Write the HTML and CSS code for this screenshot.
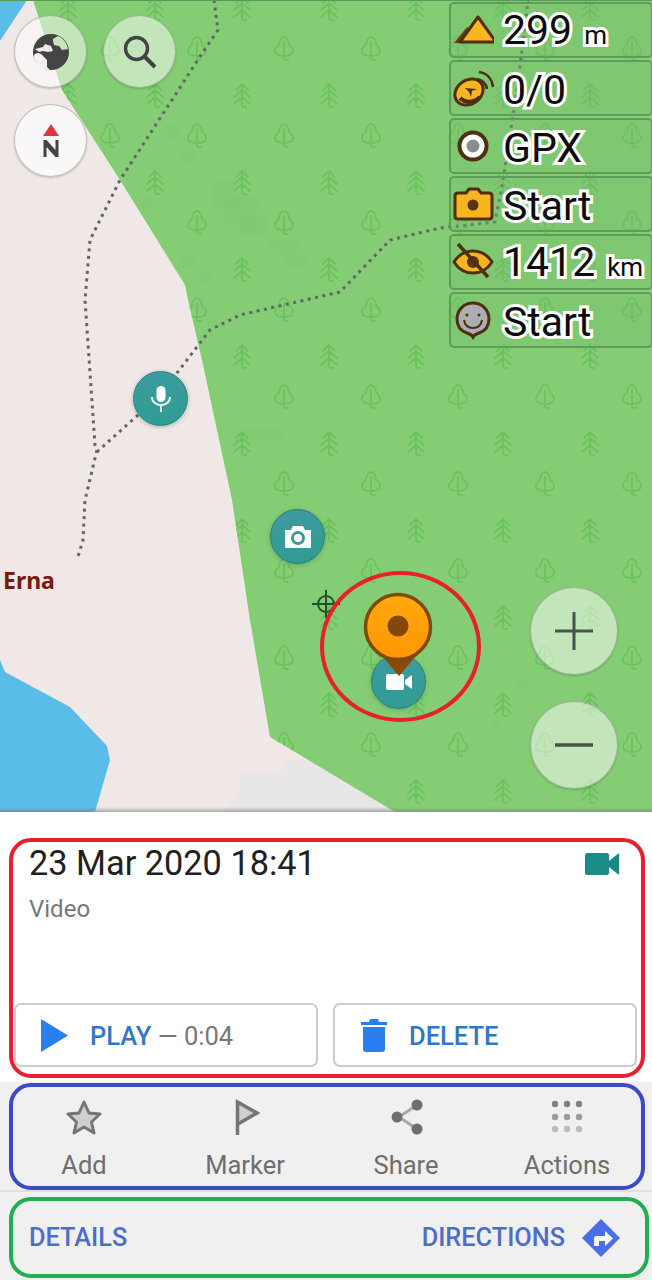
FILE: index.html
```html
<!DOCTYPE html>
<html lang="en">
<head>
<meta charset="utf-8">
<title>Map point</title>
<link rel="stylesheet" href="styles.css">
</head>
<body>
<div class="screen">
  <section class="map">
    <svg class="map-art" width="652" height="812" viewBox="0 0 652 812">
      <defs>
        <pattern id="trees" patternUnits="userSpaceOnUse" x="0" y="-20" width="87" height="87">
          <g fill="none" stroke="#6cc35d" stroke-width="1.800" stroke-linecap="round" stroke-linejoin="round">
            <path d="M23 57c-3 0-5 4-5 8-2 1-4 3-4 6 0 3 3 5 9 5s9-2 9-5c0-3-2-5-4-6 0-4-2-8-5-8z"/>
            <path d="M23 62v17c0 1 1 1 4 1"/>
            <path d="M68 17v22c0 1 1 1 4 1M62 23l6-6 6 6M60 30l8-7 8 7M60 37l8-7 8 7"/>
          </g>
        </pattern>
      </defs>
      <rect class="land" width="652" height="812"/>
      <path class="water" d="M0 41 27 0H0zM0 660l5 12 65 35 37 39 3 14-15 52H0z"/>
      <path class="haze" d="M240 790v-17h44v-13h40l70 52H225v-6z"/>
      <path class="forest" d="M33 0 62 90l58 90 65 105 3 15 14 60 30 140 18 120 20 117 125 75h257V0z"/>
      <g class="patches">
        <rect x="167" y="125" width="14" height="14"/><rect x="182" y="150" width="14" height="14"/>
        <rect x="210" y="180" width="30" height="28"/><rect x="225" y="195" width="35" height="35"/>
        <rect x="240" y="215" width="28" height="20"/><rect x="270" y="240" width="28" height="14"/>
        <rect x="285" y="255" width="25" height="14"/><rect x="182" y="255" width="14" height="14"/>
        <rect x="200" y="270" width="14" height="14"/><rect x="140" y="195" width="12" height="14"/>
        <rect x="235" y="428" width="50" height="14"/><rect x="515" y="675" width="12" height="14"/>
        <rect x="490" y="720" width="12" height="12"/>
      </g>
      <path class="tree-layer" d="M33 0 62 90l58 90 65 105 3 15 14 60 30 140 18 120 20 117 125 75h257V0z"/>
      <path class="trail" d="M214 0l4 30-15 22-83 128-30 60-5 60 10 145 2 5-12 50-2 40-6 20"/>
      <path class="trail" d="M97 452l63-57 50-65 30-15 100-23 50-52 50-12 55-6 8-42 14-90 12-96"/>
      <path class="topline" d="M0 .5h652"/>
      <g class="crosshair">
        <circle cx="326" cy="604" r="8"/>
        <path d="M326 590v28M312 604h28"/>
      </g>
    </svg>

    <span class="place">Erna</span>

    <button class="round glob" aria-label="Map layers">
      <svg width="38" height="38" viewBox="0 0 38 38"><circle cx="19" cy="19" r="18" fill="#444"/><path d="M1.500 23C4 19 8 19 12 24l3 3v7l3 3C9 37 3 31 1.500 23z" fill="#f5f1f0"/><path d="M21 6l5-3c5 2 9 7 10 13l-6 1-3-4-5-1-1-4z" fill="#c4e7ba"/><path d="M3 16l8-2 2-3 6 2 2 5-5 1-5-1-4 1z" fill="#f5f1f0" opacity=".95"/></svg>
    </button>
    <button class="round search" aria-label="Search">
      <svg width="36" height="36" viewBox="0 0 36 36" fill="none" stroke="#444" stroke-width="3.400"><circle cx="14.500" cy="14.500" r="11"/><path d="M22.500 22.500 33 33" stroke-width="4"/></svg>
    </button>
    <button class="round north" aria-label="Compass">
      <svg width="20" height="34" viewBox="0 0 20 34"><path d="M10 0 18 12H2z" fill="#e0353c"/><path d="M2.500 33V16h3l9 10V16h3v17h-3L5.500 23v10z" fill="#444"/></svg>
    </button>

    <div class="widgets">
      <div class="widget">
        <svg class="w-icon" width="42" height="42" viewBox="0 0 42 42"><path d="M2 34 15 18l3 3-10 13z" fill="#6b3f17"/><path d="M26 8 8 33h36z" fill="#f9b520" stroke="#4e2f10" stroke-width="3" stroke-linejoin="round"/></svg>
        <span class="val">299<small>m</small></span>
      </div>
      <div class="widget">
        <svg class="w-icon" width="42" height="42" viewBox="0 0 42 42"><ellipse cx="17" cy="25" rx="15" ry="12" transform="rotate(-35 17 25)" fill="#f9b520" stroke="#4e2f10" stroke-width="3"/><path d="M8 31c5 5 14 5 20-1" fill="none" stroke="#4e2f10" stroke-width="4"/><path d="M13 21l12 1-5 2-1 6-2-5z" fill="#4e2f10"/><path d="M25 12c5 1 9 4 10 10M27 5c8 1 13 7 14 15" fill="none" stroke="#4e2f10" stroke-width="2.600"/></svg>
        <span class="val">0/0</span>
      </div>
      <div class="widget">
        <svg class="w-icon" width="42" height="42" viewBox="0 0 42 42"><circle cx="21" cy="21" r="13.500" fill="#fff" stroke="#4e2f10" stroke-width="4"/><circle cx="21" cy="21" r="6.500" fill="#8b8b90"/></svg>
        <span class="val">GPX</span>
      </div>
      <div class="widget">
        <svg class="w-icon" width="42" height="42" viewBox="0 0 42 42"><path d="M6 10h8l3-4h9l3 4h8c2 0 3 1 3 3v20c0 2-1 3-3 3H6c-2 0-3-1-3-3V13c0-2 1-3 3-3z" fill="#f9b520" stroke="#4e2f10" stroke-width="3" stroke-linejoin="round"/><circle cx="21" cy="22" r="5.500" fill="#5a3412"/></svg>
        <span class="val">Start</span>
      </div>
      <div class="widget">
        <svg class="w-icon" width="42" height="42" viewBox="0 0 42 42"><path d="M2 21C7 13 13 10 21 10s14 3 19 11c-5 8-11 11-19 11S7 29 2 21z" fill="#f9b520" stroke="#4e2f10" stroke-width="3" stroke-linejoin="round"/><circle cx="21" cy="21" r="6" fill="#5a3412"/><path d="M6 3 36 36" stroke="#4e2f10" stroke-width="3.500"/></svg>
        <span class="val">1412<small>km</small></span>
      </div>
      <div class="widget">
        <svg class="w-icon" width="42" height="42" viewBox="0 0 42 42"><path d="M21 38c-1-2-3-3-6-4C9 32 5 27 5 20 5 11 12 4 21 4s16 7 16 16c0 7-4 12-10 14-3 1-5 2-6 4z" fill="#aeaeb2" stroke="#4e2f10" stroke-width="3"/><circle cx="15" cy="16" r="1.500" fill="#4e2f10"/><circle cx="27" cy="16" r="1.500" fill="#4e2f10"/><path d="M12 21c1 6 5 8 9 8s8-2 9-8" fill="none" stroke="#4e2f10" stroke-width="2"/></svg>
        <span class="val">Start</span>
      </div>
    </div>

    <button class="round zoom-in" aria-label="Zoom in">
      <svg width="38" height="38" viewBox="0 0 38 38"><path d="M0 19h38M19 0v38" stroke="#46524a" stroke-width="3"/></svg>
    </button>
    <button class="round zoom-out" aria-label="Zoom out">
      <svg width="38" height="4" viewBox="0 0 38 4"><path d="M0 2h38" stroke="#46524a" stroke-width="3.500"/></svg>
    </button>

    <span class="poi mic">
      <svg width="22" height="28" viewBox="0 0 22 28"><rect x="6.500" y="1" width="9" height="16" rx="4.500" fill="#fff"/><path d="M2 12c0 5 4 8 9 8s9-3 9-8M11 20v7" fill="none" stroke="#dff2f0" stroke-width="2"/></svg>
    </span>
    <span class="poi cam">
      <svg width="28" height="24" viewBox="0 0 28 24"><path d="M1 5h6l2-4h10l2 4h6v18H1z" fill="#fff"/><circle cx="14" cy="13" r="5.500" fill="none" stroke="#3a9a98" stroke-width="3"/></svg>
    </span>
    <span class="poi vid">
      <svg width="26" height="16" viewBox="0 0 26 16"><rect x="0" y="0" width="18" height="16" rx="2" fill="#fff"/><path d="M19 6 26 1v14l-7-5z" fill="#fff"/></svg>
    </span>

    <svg class="pin" width="72" height="86" viewBox="0 0 72 86">
      <defs>
        <linearGradient id="pinfill" x1="0" y1="0" x2="0" y2="1">
          <stop offset="0" stop-color="#ffa90c"/><stop offset="1" stop-color="#ff9606"/>
        </linearGradient>
      </defs>
      <path d="M36 84 7 50h58z" fill="#8a4b06"/>
      <circle cx="35" cy="35" r="32.500" fill="url(#pinfill)" stroke="#7e4a08" stroke-width="3.500"/>
      <circle cx="35" cy="34" r="10.500" fill="#83470b"/>
    </svg>

    <span class="callout"></span>
    <span class="map-shade"></span>
  </section>

  <section class="info">
    <div class="box box-red">
      <div class="info-head">
        <div>
          <h1 class="title">23 Mar 2020 18:41</h1>
          <p class="kind">Video</p>
        </div>
        <svg class="kind-icon" width="34" height="22" viewBox="0 0 34 22"><rect width="24" height="22" rx="2.500" fill="#1a8a84"/><path d="M24 8 34 0v22L24 14z" fill="#1a8a84"/></svg>
      </div>
      <div class="info-btns">
        <button class="btn btn-play">
          <svg width="27" height="33" viewBox="0 0 27 33"><path d="M0 0 27 16.500 0 33z" fill="#2a7ff0"/></svg>
          <span><b>PLAY</b><i> — 0:04</i></span>
        </button>
        <button class="btn btn-del">
          <svg width="26" height="33" viewBox="0 0 26 33"><path d="M0 3h8l1-3h8l1 3h8v3H0zM2 8h22v22c0 2-1 3-3 3H5c-2 0-3-1-3-3z" fill="#2a7ff0"/></svg>
          <span><b>DELETE</b></span>
        </button>
      </div>
    </div>
  </section>

  <section class="actions">
    <div class="box box-blue">
      <div class="action">
        <svg width="38" height="36" viewBox="0 0 38 36"><path d="M19 3 24 14l11 1-8.500 8L29 34l-10-6-10 6 2.500-11L3 15l11-1z" fill="#cfcfcf" stroke="#757575" stroke-width="3" stroke-linejoin="round"/></svg>
        <span>Add</span>
      </div>
      <div class="action">
        <svg width="38" height="36" viewBox="0 0 38 36"><path d="M11 2 33 14 11 26z" fill="#cfcfcf"/><path d="M11.500 36V3L31 14 12 25" fill="none" stroke="#757575" stroke-width="3.500"/></svg>
        <span>Marker</span>
      </div>
      <div class="action">
        <svg width="38" height="36" viewBox="0 0 38 36"><path d="M12 18 30 6M12 18l18 12" stroke="#a8a8a8" stroke-width="3"/><circle cx="10" cy="18" r="5.500" fill="#6f6f6f"/><circle cx="30" cy="6" r="5.500" fill="#6f6f6f"/><circle cx="30" cy="30" r="5.500" fill="#6f6f6f"/></svg>
        <span>Share</span>
      </div>
      <div class="action">
        <svg width="38" height="36" viewBox="0 0 38 36"><g fill="#808080"><circle cx="7" cy="5" r="3.200"/><circle cx="19" cy="5" r="3.200"/><circle cx="31" cy="5" r="3.200"/></g><g fill="#9c9c9c"><circle cx="7" cy="18" r="3.200"/><circle cx="19" cy="18" r="3.200"/><circle cx="31" cy="18" r="3.200"/></g><g fill="#bcbcbc"><circle cx="7" cy="30" r="3.200"/><circle cx="19" cy="30" r="3.200"/><circle cx="31" cy="30" r="3.200"/></g></svg>
        <span>Actions</span>
      </div>
    </div>
  </section>

  <section class="footer">
    <div class="box box-green">
      <span class="link">DETAILS</span>
      <div class="dirs">
        <span class="link">DIRECTIONS</span>
        <svg width="38" height="38" viewBox="0 0 38 38"><path d="M19 0 38 19 19 38 0 19z" fill="#4a6ee8"/><path d="M12 27v-7c0-2 1-3 3-3h8v-5l8 7.500-8 7.500v-5h-6v5z" fill="#fff"/></svg>
      </div>
    </div>
  </section>
</div>
</body>
</html>
```
FILE: styles.css
```css
* { box-sizing: border-box; }
html, body { margin: 0; padding: 0; }
body { background: #fff; font-family: Roboto, "Noto Sans", sans-serif; }
.screen { width: 652px; height: 1280px; overflow: hidden; display: flex; flex-direction: column; }

/* map */
.map { position: relative; height: 812px; flex: none; overflow: hidden; background: #efe8e6; }
.map-art { display: block; }
.land { fill: #efe8e6; }
.water { fill: #5abde8; }
.haze { fill: #e9e6e8; }
.forest { fill: #84cd74; }
.tree-layer { fill: url(#trees); }
.patches rect { fill: #7dc470; opacity: .25; }
.trail { fill: none; stroke: #62666a; stroke-width: 3; stroke-dasharray: 3 4.500; }
.topline { stroke: #5a9a58; stroke-width: 1; }
.crosshair { fill: none; stroke: #21522a; stroke-width: 2; }
.place { position: absolute; left: 3px; top: 565px; font: 700 23px/30px "Noto Sans", sans-serif; color: #7a1a0e; }

.round {
  position: absolute; display: flex; align-items: center; justify-content: center;
  padding: 0; border-radius: 50%; border: 1px solid rgba(90, 90, 80, .35);
  background: rgba(255, 255, 255, .5); box-shadow: 0 1px 2px rgba(0, 0, 0, .2);
}
.glob, .search, .north { width: 73px; height: 73px; }
.glob { left: 14px; top: 15px; }
.search { left: 103px; top: 15px; }
.north { left: 14px; top: 104px; background: rgba(250, 248, 248, .9); }
.zoom-in, .zoom-out { width: 88px; height: 88px; }
.zoom-in { left: 530px; top: 587px; }
.zoom-out { left: 530px; top: 701px; }

.widgets { position: absolute; left: 449px; top: 2px; width: 204px; display: flex; flex-direction: column; gap: 2px; }
.widget {
  height: 56px; display: flex; align-items: center; gap: 9px; padding-left: 1px;
  border: 2px solid #5d9d58; border-radius: 5px; background: rgba(118, 190, 108, .35);
}
.w-icon { flex: none; }
.val {
  font-size: 41px; line-height: 50px; color: #0c0c0c; white-space: nowrap; padding-top: 4px;
  -webkit-text-stroke: 6px #fff; paint-order: stroke fill;
}
.val small { font-size: 26px; margin-left: 12px; }

.poi {
  position: absolute; width: 55px; height: 55px; border-radius: 50%; display: flex;
  align-items: center; justify-content: center;
  background: linear-gradient(#3c9ba0, #2f9c92); border: 1px solid #267f7d;
  box-shadow: 0 1px 4px rgba(40, 90, 70, .35);
}
.mic { left: 133px; top: 371px; }
.cam { left: 270px; top: 509px; }
.vid { left: 371px; top: 654px; }
.pin { position: absolute; left: 363px; top: 592px; }
.callout {
  position: absolute; left: 320px; top: 571px; width: 161px; height: 151px;
  border: 4px solid #e8202c; border-radius: 50%;
}
.map-shade { position: absolute; left: 0; right: 0; bottom: 0; height: 5px; background: linear-gradient(rgba(120, 120, 120, 0), rgba(120, 120, 120, .55)); }

/* annotated boxes */
.box { border-style: solid; border-width: 4px; border-radius: 22px; }

/* info */
.info { flex: none; height: 270px; padding: 26px 7px 4px 9px; background: #fff; }
.box-red { height: 240px; border-color: #e8202c; padding: 1px 4px 7px 1px; display: flex; flex-direction: column; justify-content: space-between; }
.info-head { display: flex; justify-content: space-between; align-items: flex-start; padding-left: 15px; }
.title { margin: 0; font-weight: 400; font-size: 34.300px; line-height: 40px; color: #212121; }
.kind { margin: 11px 0 0; font-size: 24px; line-height: 30px; color: #777; }
.kind-icon { margin: 10px 18px 0 0; }
.info-btns { display: flex; gap: 15px; }
.btn {
  height: 64px; display: flex; align-items: center; padding: 0; background: #fff;
  border: 2px solid #ccc; border-radius: 7px; font-family: inherit; font-size: 25.500px;
}
.btn span { padding-top: 2px; }
.btn b { font-weight: 500; color: #2f78c8; }
.btn i { font-style: normal; color: #777; }
.btn-play { width: 304px; gap: 22px; padding-left: 25px; }
.btn-del { width: 304px; gap: 22px; padding-left: 26px; }

/* actions */
.actions { flex: none; height: 110px; padding: 1px 7px 0 9px; background: #f0f0f0; border-bottom: 2px solid #e0e0e0; }
.box-blue { height: 107px; border-color: #3d4ac4; display: flex; justify-content: space-between; padding: 12px 29px 0 26px; }
.action { width: 90px; display: flex; flex-direction: column; align-items: center; gap: 15px; color: #6e6e6e; font-size: 25.500px; line-height: 30px; }
.action svg { display: block; }

/* footer */
.footer { flex: none; height: 88px; padding: 5px 3px 2px 9px; background: #f0f0f0; }
.box-green { height: 81px; border-color: #22ad50; display: flex; align-items: center; justify-content: space-between; padding: 0 25px 0 16px; }
.link { font-size: 25.300px; font-weight: 500; color: #4f6ccc; }
.dirs { display: flex; align-items: center; gap: 17px; }
```
